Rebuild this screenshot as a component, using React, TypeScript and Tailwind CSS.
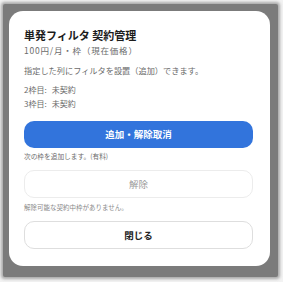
import React from "react";

const FONT = { fontFamily: "'Noto Sans CJK JP', 'Noto Sans', sans-serif" };

const slots = [
  { label: "2枠目:", status: "未契約" },
  { label: "3枠目:", status: "未契約" },
];

export default function App() {
  return (
    <div className="w-[283px] h-[282px] bg-[#f3f3f3] pt-[4px] pl-[3px] pr-[5px] pb-[5px] flex" style={FONT}>
      <div className="flex-1 bg-[#7b7b7b] rounded-[2px] shadow-[0_0_3px_2px_rgba(120,120,120,0.6)] pt-[7px] pl-[6px] pr-[8px] pb-[11px] flex">
        <div className="w-[261px] h-[255px] bg-white rounded-[14px] pt-[17px] pl-[15px] pr-[17px] flex flex-col">
          <div className="text-[11px] leading-[14px] font-bold text-[#1c1c1c]">単発フィルタ 契約管理</div>
          <div className="mt-[2px] text-[8.5px] leading-[12px] tracking-[0.8px] text-[#6b6b6b]">100円/月・枠（現在価格）</div>
          <div className="mt-[8px] text-[8.2px] leading-[12px] text-[#6b6b6b]">指定した列にフィルタを設置（追加）できます。</div>
          <div className="mt-[8px] flex flex-col gap-[2px]">
            {slots.map((s) => (
              <div key={s.label} className="text-[8px] leading-[12px] text-[#6b6b6b]">
                {s.label}
                <span className="ml-[5px]">{s.status}</span>
              </div>
            ))}
          </div>
          <button className="mt-[11px] h-[27px] w-full rounded-[10px] bg-[#3274dc] text-white text-[9.5px] font-bold flex items-center justify-center">
            追加・解除取消
          </button>
          <div className="mt-[3px] text-[6.7px] leading-[10px] text-[#6b6b6b]">次の枠を追加します。(有料)</div>
          <button className="mt-[9px] h-[28px] w-full rounded-[10px] border border-[#ececec] bg-white text-[#9a9a9a] text-[9.5px] flex items-center justify-center">
            解除
          </button>
          <div className="mt-[4px] text-[6.5px] leading-[10px] text-[#8a8a8a]">解除可能な契約中枠がありません。</div>
          <button className="mt-[9px] h-[28px] w-full rounded-[10px] border border-[#dedede] bg-white text-[#222] text-[9.5px] font-bold flex items-center justify-center">
            閉じる
          </button>
        </div>
      </div>
    </div>
  );
}
